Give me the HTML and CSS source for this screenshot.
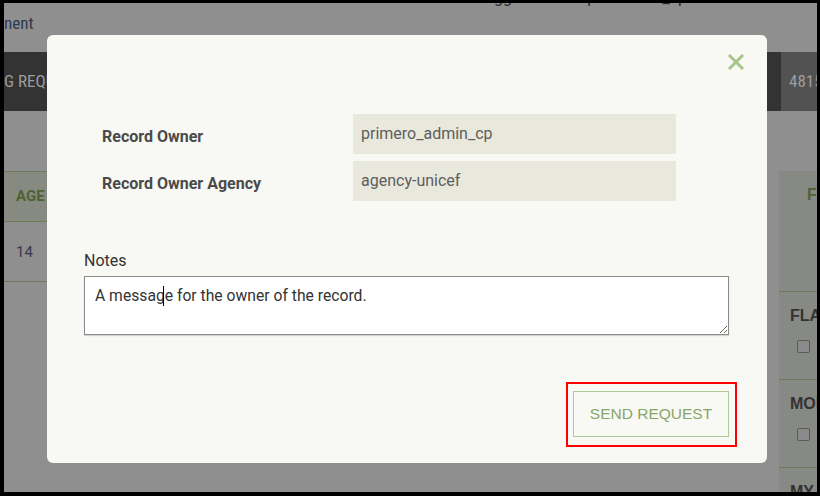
FILE: index.html
```html
<!DOCTYPE html>
<html>
<head>
<meta charset="utf-8">
<link rel="stylesheet" href="styles.css">
</head>
<body>
<div class="frame">
  <div class="topbar">
    <div class="user-line"><span class="u1">logged in as</span><span class="u2">primero</span><span class="u3">_cp</span></div>
    <div class="crumb">nent</div>
  </div>
  <div class="navbar">
    <div class="nav-left">G REQUESTS</div>
    <div class="nav-right">4815</div>
  </div>
  <div class="content">
    <div class="table-col">
      <div class="th">AGE</div>
      <div class="td">14</div>
    </div>
    <div class="filters">
      <div class="f-head">F</div>
      <div class="f-group">
        <div class="f-title">FLAG</div>
        <span class="cb"></span>
      </div>
      <div class="f-group">
        <div class="f-title">MOB</div>
        <span class="cb"></span>
      </div>
      <div class="f-group">
        <div class="f-title">MY</div>
      </div>
    </div>
  </div>

  <div class="modal">
    <div class="close" aria-label="close">
      <svg width="16" height="16" viewBox="0 0 16 16"><path d="M2 2 L14 14 M14 2 L2 14" stroke="#a9c68a" stroke-width="3" stroke-linecap="square"/></svg>
    </div>
    <div class="owner-grid">
      <div class="lbl">Record Owner</div>
      <div class="val">primero_admin_cp</div>
      <div class="lbl">Record Owner Agency</div>
      <div class="val">agency-unicef</div>
    </div>
    <div class="notes">
      <div class="notes-lbl">Notes</div>
      <div class="notes-box">A messag<span class="caret"></span>e for the owner of the record.</div>
    </div>
    <div class="actions">
      <div class="highlight">
        <button class="send">SEND REQUEST</button>
      </div>
    </div>
  </div>
</div>
</body>
</html>
```

FILE: styles.css
```css
html, body {
  margin: 0;
  padding: 0;
  background: #000;
}
.frame {
  position: relative;
  width: 813px;
  height: 489px;
  margin: 3px 0 0 4px;
  overflow: hidden;
  background: #8f8f8f;
  font-family: Roboto, "Liberation Sans", sans-serif;
}
.topbar {
  display: flow-root;
  height: 49px;
  overflow: hidden;
}
.user-line {
  display: flex;
  justify-content: flex-end;
  gap: 20px;
  padding-right: 130px;
  margin-top: -14px;
  height: 18px;
  font-size: 16px;
  line-height: 18px;
  color: #2a2a2a;
}
.crumb {
  margin-top: 6px;
  font-family: "Liberation Sans Narrow", "Roboto Condensed", Roboto, sans-serif;
  font-size: 17px;
  line-height: 20px;
  color: #2c3a50;
}
.navbar {
  height: 59px;
  display: flex;
  background: #333;
}
.nav-left {
  width: 777px;
  font-family: "Liberation Sans Narrow", "Roboto Condensed", Roboto, sans-serif;
  font-size: 17px;
  line-height: 59px;
  color: #9d9d9d;
  white-space: nowrap;
  overflow: hidden;
}
.nav-right {
  flex: 1;
  background: #525252;
  padding-left: 8px;
  font-family: "Liberation Sans Narrow", "Roboto Condensed", Roboto, sans-serif;
  font-size: 17px;
  line-height: 59px;
  color: #9d9d9d;
  white-space: nowrap;
  overflow: hidden;
}
.content {
  display: flex;
  justify-content: space-between;
  padding-top: 60px;
}
.table-col {
  width: 43px;
  overflow: hidden;
}
.th {
  height: 49px;
  border-top: 1px solid #6d7a55;
  border-bottom: 1px solid #6d7a55;
  background: #868a80;
  padding-left: 12px;
  font-weight: bold;
  font-size: 15px;
  line-height: 49px;
  color: #4f6233;
  white-space: nowrap;
}
.td {
  height: 59px;
  border-bottom: 1px solid #6d7a55;
  padding-left: 12px;
  font-size: 15px;
  line-height: 60px;
  color: #3a3650;
}
.filters {
  width: 38px;
  background: #878985;
  overflow: hidden;
  white-space: nowrap;
  font-family: "Liberation Sans", Arial, sans-serif;
}
.f-head {
  height: 121px;
  border-bottom: 1px solid #6d7a55;
  padding-left: 28px;
  padding-top: 15px;
  box-sizing: border-box;
  font-weight: bold;
  font-size: 16px;
  color: #4f6233;
}
.f-group {
  height: 88px;
  border-bottom: 1px solid #6d7a55;
  padding-left: 11px;
  padding-top: 14px;
  box-sizing: border-box;
}
.f-title {
  font-weight: bold;
  font-size: 16px;
  line-height: 20px;
  color: #333;
}
.cb {
  display: block;
  width: 11px;
  height: 11px;
  margin: 14px 0 0 7px;
  border: 1px solid #5a5a5a;
  border-radius: 2px;
  background: #8a8a8a;
}
.modal {
  position: absolute;
  left: 43px;
  top: 32px;
  width: 720px;
  height: 428px;
  box-sizing: border-box;
  background: #f8f8f4;
  border-radius: 6px;
  padding: 79px 30px 0 37px;
}
.close {
  position: absolute;
  left: 681px;
  top: 19px;
  width: 16px;
  height: 16px;
}
.close svg {
  display: block;
}
.owner-grid {
  display: grid;
  grid-template-columns: 251px 323px;
  grid-auto-rows: 40px;
  row-gap: 7px;
  margin-left: 18px;
}
.lbl {
  align-self: center;
  padding-top: 5px;
  font-size: 16px;
  font-weight: bold;
  color: #4a4a4a;
}
.val {
  background: #e8e9dc;
  padding-left: 8px;
  font-size: 16px;
  line-height: 40px;
  color: #5e5e5e;
}
.notes {
  margin-top: 51px;
}
.notes-lbl {
  font-size: 16px;
  line-height: 18px;
  color: #333;
  margin-bottom: 6px;
}
.notes-box {
  width: 645px;
  height: 59px;
  box-sizing: border-box;
  border: 1px solid #8c8c8c;
  background: #fff;
  padding: 9px 10px;
  font-size: 15.7px;
  line-height: 20px;
  color: #333;
  resize: both;
  overflow: hidden;
  box-shadow: 0 1px 1px rgba(0,0,0,0.15);
}
.caret {
  display: inline-block;
  width: 1px;
  height: 20px;
  margin-left: -2px;
  margin-right: 1px;
  background: #000;
  vertical-align: -5px;
}
.actions {
  display: flex;
  justify-content: flex-end;
  margin-top: 47px;
}
.highlight {
  border: 2px solid #f00;
  padding: 7px 6px 8px 5px;
}
.send {
  display: block;
  width: 156px;
  height: 46px;
  border: 1px solid #b2c997;
  background: transparent;
  font-family: "Liberation Sans", Arial, sans-serif;
  font-size: 15.5px;
  color: #8aa666;
  padding: 0;
}
```
